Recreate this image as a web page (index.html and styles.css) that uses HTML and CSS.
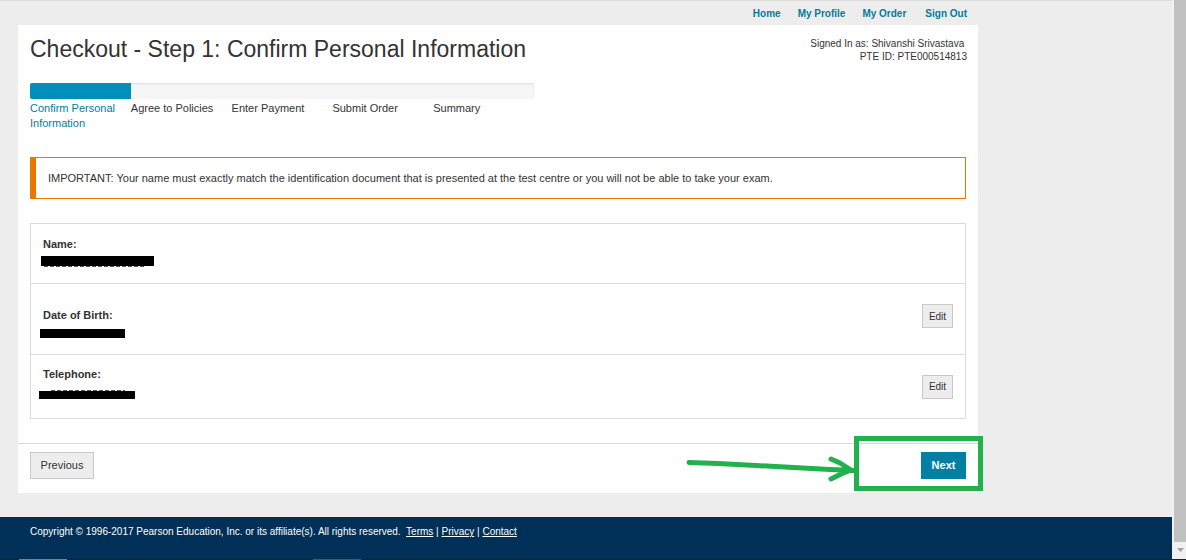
FILE: index.html
```html
<!DOCTYPE html>
<html lang="en">
<head>
<meta charset="utf-8">
<title>Checkout - Confirm Personal Information</title>
<link rel="stylesheet" href="styles.css">
</head>
<body>
<div class="window">
  <div class="page">
    <div class="container">
      <nav class="topnav" aria-label="Account">
        <a href="#">Home</a>
        <a href="#">My Profile</a>
        <a href="#" class="order">My Order</a>
        <a href="#">Sign Out</a>
      </nav>
      <main class="panel">
        <header class="heading">
          <h1>Checkout - Step 1: Confirm Personal Information</h1>
          <p class="account">Signed In as: Shivanshi Srivastava&nbsp;<br>PTE ID: PTE000514813</p>
        </header>
        <div class="progress">
          <div class="track"><div class="fill"></div></div>
          <ol class="steps">
            <li class="current">Confirm Personal Information</li>
            <li>Agree to Policies</li>
            <li>Enter Payment</li>
            <li>Submit Order</li>
            <li>Summary</li>
          </ol>
        </div>
        <p class="alert">IMPORTANT: Your name must exactly match the identification document that is presented at the test centre or you will not be able to take your exam.</p>
        <dl class="details">
          <div class="row name">
            <div class="field"><dt>Name:</dt><dd><span class="redacted"></span></dd></div>
          </div>
          <div class="row birth">
            <div class="field"><dt>Date of Birth:</dt><dd><span class="redacted"></span></dd></div>
            <button type="button" class="edit">Edit</button>
          </div>
          <div class="row phone">
            <div class="field"><dt>Telephone:</dt><dd><span class="redacted"></span></dd></div>
            <button type="button" class="edit">Edit</button>
          </div>
        </dl>
        <div class="actions">
          <button type="button" class="previous">Previous</button>
          <button type="button" class="next">Next</button>
          <svg class="callout" width="304" height="60" viewBox="0 0 304 60" fill="none" stroke="#22b14c" stroke-width="5" aria-hidden="true">
            <rect x="176.500" y="4.500" width="124" height="50"/>
            <path d="M9 28.500L38 29.500L76 31.500L114 33.500L150 35.500L176 36.500M151 25L160 29L171 36L161 40L151 45" stroke-linecap="round" stroke-linejoin="round"/>
          </svg>
        </div>
      </main>
    </div>
    <footer class="footer">Copyright © 1996-2017 Pearson Education, Inc. or its affiliate(s). All rights reserved.&nbsp; <a href="#">Terms</a> | <a href="#">Privacy</a> | <a href="#">Contact</a></footer>
  </div>
  <div class="scrollbar" aria-hidden="true">
    <div class="thumb"></div>
    <svg width="12" height="17" viewBox="0 0 12 17"><path d="M3 6H10L6.500 10Z" fill="#a3a3a3"/></svg>
  </div>
</div>
<div class="taskbar"><span class="tab warm"></span><span class="tab cool"></span></div>
</body>
</html>
```
FILE: styles.css
```css
* { box-sizing: border-box; }
body {
  margin: 0;
  min-height: 100vh;
  display: flex;
  flex-direction: column;
  background: #ededed;
  color: #333;
  font: 11px/15px "Liberation Sans", Arial, sans-serif;
}
h1, p, ol, dl, dd { margin: 0; padding: 0; }
button { font: inherit; color: #333; background: #ededed; border: 1px solid #c9c9c9; border-radius: 0; padding: 0; }
.window { flex: 1; display: flex; }
.page { flex: 1; display: flex; flex-direction: column; border-top: 1px solid #dcdcdc; }
.container { max-width: 978px; padding-left: 18px; }
.topnav {
  display: flex;
  justify-content: flex-end;
  gap: 17px;
  padding: 5px 11px 4px 0;
  font-size: 10px;
  font-weight: bold;
}
.topnav a { color: #047a9c; text-decoration: none; }
.order { margin-right: 2px; }
.panel { background: #fff; }
.heading { display: flex; justify-content: space-between; padding: 9px 11px 0 12px; }
h1 { font-size: 23px; line-height: 30px; font-weight: normal; }
.account { padding-top: 3px; font-size: 10px; line-height: 13px; text-align: right; }
.progress { max-width: 516px; padding: 19px 0 0 12px; }
.track {
  height: 16px;
  overflow: hidden;
  border-radius: 2px;
  background: #f6f6f6;
  box-shadow: inset 0 1px 2px #ddd;
}
.fill { width: 20%; height: 100%; background: #008eba; }
.steps { display: grid; grid-template-columns: repeat(5, 1fr); padding-top: 2px; list-style: none; }
.current { color: #047a9c; }
.alert {
  margin: 26px 12px 0;
  padding: 13px 12px 12px;
  border: 1px solid #ea7600;
  border-left-width: 6px;
}
.details { margin: 24px 12px; border: 1px solid #dcdcdc; }
.row {
  display: flex;
  justify-content: space-between;
  align-items: center;
  padding: 0 12px;
}
.row + .row { border-top: 1px solid #dcdcdc; }
.name { height: 59px; }
.birth { height: 71px; }
.phone { height: 64px; }
dt { font-weight: bold; }
.redacted { display: block; margin-left: -2px; background: #000; }
.name .field { padding-top: 2px; }
.name .redacted { width: 113px; height: 10px; margin-top: 4px; margin-bottom: 6px; }
.birth .field { padding-top: 10px; }
.birth .redacted { width: 85px; height: 9px; margin: 6px 0 2px -3px; }
.birth .edit { margin-bottom: 6px; }
.phone .redacted { width: 96px; height: 8px; margin: 9px 0 8px -4px; }
/* Traces of the covered value along the edge of the bar */
.name .redacted, .phone .redacted { position: relative; }
.name .redacted::after, .phone .redacted::before {
  content: "";
  position: absolute;
  height: 1px;
  background: repeating-linear-gradient(90deg, #555 0 4px, #fff 4px 6px);
}
.name .redacted::after { left: 3px; right: 9px; top: 100%; }
.phone .redacted::before { left: 12px; right: 10px; bottom: 100%; }
.edit { width: 31px; height: 24px; font-size: 10px; }
.actions {
  position: relative;
  display: flex;
  justify-content: space-between;
  padding: 8px 12px 14px;
  border-top: 1px solid #dcdcdc;
}
.previous { width: 64px; height: 27px; }
.next { width: 45px; height: 27px; background: #047fa4; border: 0; color: #fff; font-weight: bold; }
.callout { position: absolute; right: -6px; top: -10px; }
.footer {
  flex: 1;
  margin-top: 24px;
  padding: 7px 30px;
  background: #003057;
  color: #fff;
  font-size: 10px;
}
.footer a { color: inherit; }
.scrollbar { width: 14px; padding-left: 2px; display: flex; flex-direction: column; background: #f1f1f1; }
.thumb { flex: 1; background: #c1c1c1; }
.taskbar { display: flex; gap: 246px; height: 1px; padding-left: 19px; background: #1e2022; }
.tab { width: 48px; height: 1px; }
.warm { background: #9a7757; }
.cool { background: #45586b; }
```
